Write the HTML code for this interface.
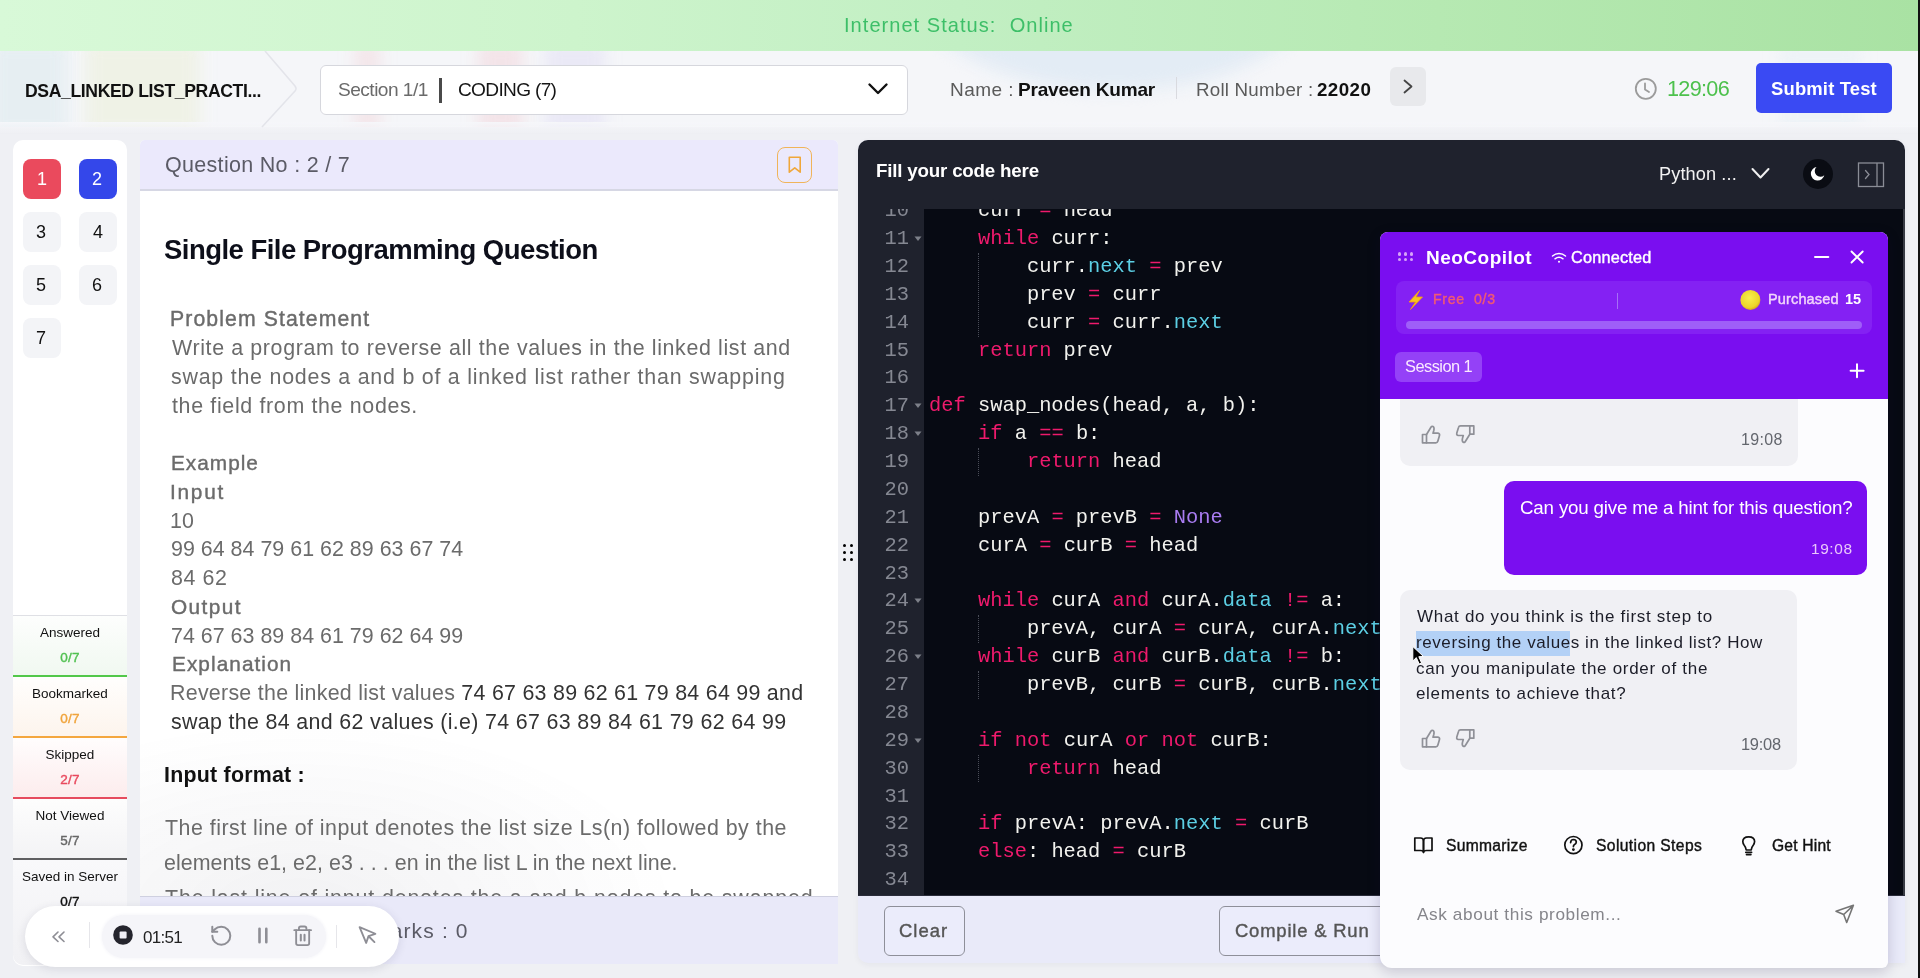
<!DOCTYPE html>
<html><head><meta charset="utf-8">
<style>
*{box-sizing:border-box;margin:0;padding:0}
html,body{width:1920px;height:978px;overflow:hidden}
body{position:relative;background:#eff0f4;font-family:"Liberation Sans",sans-serif;color:#111}
.a{position:absolute;white-space:pre;will-change:transform}
svg{position:absolute;overflow:visible}
.blob{position:absolute;filter:blur(8px)}
.qb{position:absolute;width:38px;height:40px;border-radius:8px;background:#f3f4f7}
.leg{position:absolute;left:13px;width:114px;height:61.5px}
.leg .bar{position:absolute;left:0;bottom:0;width:114px;height:3px}
.ln{position:absolute;left:0;width:51px;text-align:right;font-family:"Liberation Mono",monospace;font-size:20.4px;line-height:27.87px;color:#858892;white-space:pre}
.cl{position:absolute;left:5px;font-family:"Liberation Mono",monospace;font-size:20.4px;line-height:27.87px;color:#f2f2ee;white-space:pre}
.k{color:#ee1a6c}.at{color:#5ccfe4}.nn{color:#a97cf2}
.guide{position:absolute;width:0;border-left:1px dotted #4a4d58}
.dot{position:absolute;width:3.4px;height:3.4px;border-radius:50%}
</style></head>
<body>
<!-- banner -->
<div class="a" style="left:0;top:0;width:1918px;height:51px;background:linear-gradient(90deg,#d8f9d8 0%,#cdf4cc 30%,#c2efc3 50%,#b6e9b2 75%,#a9e2a3 100%)"></div>
<div class="a" style="left:1918px;top:0;width:2px;height:978px;background:#111"></div>

<!-- header -->
<div class="a" style="left:0;top:51px;width:1918px;height:76px;background:#f5f6f9;overflow:hidden">
  <div class="blob" style="left:-10px;top:-10px;width:78px;height:96px;background:#e5eef2;opacity:.9"></div>
  <div class="blob" style="left:85px;top:-10px;width:115px;height:96px;background:#eff2e5;opacity:.9"></div>
  <div class="blob" style="left:355px;top:-10px;width:25px;height:96px;background:#f3dfe3;opacity:.7"></div>
  <div class="blob" style="left:478px;top:-10px;width:45px;height:96px;background:#f3dde2;opacity:.7"></div>
  <div class="blob" style="left:545px;top:-10px;width:60px;height:96px;background:#e6e4f5;opacity:.7"></div>
  <div class="blob" style="left:915px;top:-165px;width:400px;height:205px;border-radius:50%;background:#e3ecf5;opacity:.95"></div>
  <div class="blob" style="left:1780px;top:-10px;width:80px;height:96px;background:#e9f1f6;opacity:.6"></div>
</div>
<div class="a" style="left:0;top:122px;width:1918px;height:12px;background:linear-gradient(180deg,rgba(245,246,249,1) 0%,rgba(239,240,244,0) 100%)"></div>
<svg style="left:0;top:0" width="1920" height="140"><path d="M265 51 L295 86 Q297 88.5 295 91 L262 127" fill="none" stroke="#e3e4ea" stroke-width="1.6"/></svg>
<div class="a" style="left:319.5px;top:64.5px;width:588px;height:50px;background:#fff;border:1px solid #d6d7dd;border-radius:6px"></div>
<div class="a" style="left:439px;top:78px;width:2.5px;height:24.5px;background:#4a4a4a"></div>
<svg style="left:0;top:0" width="1" height="1"><path d="M869.5 84.5 L878 93 L886.5 84.5" fill="none" stroke="#111" stroke-width="2.4" stroke-linecap="round" stroke-linejoin="round"/></svg>
<div class="a" style="left:1175.5px;top:77px;width:1px;height:22px;background:#d9dadf"></div>
<div class="a" style="left:1390px;top:67px;width:35.5px;height:38.5px;background:#e8e9ec;border-radius:6px"></div>
<svg style="left:0;top:0" width="1" height="1"><path d="M1404.5 80.5 L1411.5 86.5 L1404.5 92.5" fill="none" stroke="#444" stroke-width="1.8" stroke-linecap="round" stroke-linejoin="round"/></svg>
<svg style="left:0;top:0" width="1" height="1"><circle cx="1645.8" cy="88.8" r="10" fill="none" stroke="#9b9b9b" stroke-width="1.8"/><path d="M1645 83.5 V89.5 L1649 92" fill="none" stroke="#9b9b9b" stroke-width="1.8" stroke-linecap="round" stroke-linejoin="round"/></svg>
<div class="a" style="left:1756.4px;top:63.4px;width:136px;height:50px;background:#3a4af3;border-radius:5px"></div>

<!-- sidebar -->
<div class="a" style="left:13px;top:140px;width:114px;height:826px;background:#fff;border-radius:10px"></div>
<div class="qb" style="left:23px;top:158.5px;background:#ea4a5d"></div>
<div class="qb" style="left:79px;top:158.5px;background:#3447ea"></div>
<div class="qb" style="left:23px;top:212px"></div>
<div class="qb" style="left:79px;top:212px"></div>
<div class="qb" style="left:23px;top:265px"></div>
<div class="qb" style="left:79px;top:265px"></div>
<div class="qb" style="left:23px;top:318px"></div>
<div class="a" style="left:13px;top:615px;width:114px;height:1px;background:#dfe0e5"></div>
<div class="leg" style="top:616px;background:linear-gradient(180deg,#fdfefd 0%,#f0f8f0 100%)"><div class="bar" style="background:#52c84a"></div></div>
<div class="leg" style="top:677px;background:linear-gradient(180deg,#fffefd 0%,#fdf4ec 100%)"><div class="bar" style="background:#f4a73f"></div></div>
<div class="leg" style="top:738px;background:linear-gradient(180deg,#fffdfd 0%,#fcebec 100%)"><div class="bar" style="background:#e64b5e"></div></div>
<div class="leg" style="top:799px;background:linear-gradient(180deg,#fdfdfd 0%,#f3f3f5 100%)"><div class="bar" style="background:#5f5f61"></div></div>
<div class="leg" style="top:860px;height:105px;background:linear-gradient(180deg,#f9f9fb 0%,#f1f1f4 100%);border-radius:0 0 10px 10px"></div>

<!-- question panel -->
<div class="a" style="left:140px;top:140px;width:698px;height:823px;background:#fff;border-radius:5px 5px 0 0"></div>
<div class="a" style="left:140px;top:140px;width:698px;height:51px;background:#ebe9fc;border-bottom:2px solid #d6d7e4;border-radius:5px 5px 0 0"></div>
<div class="a" style="left:140px;top:700px;width:698px;height:196px;background:radial-gradient(ellipse 380px 190px at 160px 210px,rgba(30,30,60,.06),rgba(30,30,60,0))"></div>
<div class="a" style="left:777px;top:147px;width:35px;height:35.5px;border:1.4px solid #f0b45a;border-radius:8px"></div>
<svg style="left:0;top:0" width="1" height="1"><path d="M789.3 157.3 H800.2 V172.2 L794.75 167.8 L789.3 172.2 Z" fill="none" stroke="#f0a73a" stroke-width="1.6" stroke-linejoin="round"/></svg>

<!-- drag handle -->
<div class="dot" style="left:842.7px;top:543.5px;background:#000"></div><div class="dot" style="left:850px;top:543.5px;background:#000"></div>
<div class="dot" style="left:842.7px;top:550.6px;background:#000"></div><div class="dot" style="left:850px;top:550.6px;background:#000"></div>
<div class="dot" style="left:842.7px;top:557.7px;background:#000"></div><div class="dot" style="left:850px;top:557.7px;background:#000"></div>

<!-- editor -->
<div class="a" style="left:858px;top:140px;width:1047px;height:823px;border-radius:10px 10px 0 10px;overflow:hidden;background:#e9eaf9;box-shadow:0 2px 6px rgba(30,30,70,.05)">
  <div class="a" style="left:0;top:0;width:1047px;height:69px;background:#1f222d"></div>
  <div class="a" style="left:0;top:69px;width:66px;height:686px;background:#1f222d;overflow:hidden">
<div class="ln" style="top:-11.75px">10</div>
<div class="ln" style="top:16.12px">11</div>
<svg style="left:56px;top:26.98px" width="8" height="6"><path d="M0.5 0.5 L7.5 0.5 L4 5 Z" fill="#7d8089"/></svg>
<div class="ln" style="top:43.99px">12</div>
<div class="ln" style="top:71.86px">13</div>
<div class="ln" style="top:99.73px">14</div>
<div class="ln" style="top:127.60px">15</div>
<div class="ln" style="top:155.47px">16</div>
<div class="ln" style="top:183.34px">17</div>
<svg style="left:56px;top:194.20px" width="8" height="6"><path d="M0.5 0.5 L7.5 0.5 L4 5 Z" fill="#7d8089"/></svg>
<div class="ln" style="top:211.21px">18</div>
<svg style="left:56px;top:222.07px" width="8" height="6"><path d="M0.5 0.5 L7.5 0.5 L4 5 Z" fill="#7d8089"/></svg>
<div class="ln" style="top:239.08px">19</div>
<div class="ln" style="top:266.95px">20</div>
<div class="ln" style="top:294.82px">21</div>
<div class="ln" style="top:322.69px">22</div>
<div class="ln" style="top:350.56px">23</div>
<div class="ln" style="top:378.43px">24</div>
<svg style="left:56px;top:389.29px" width="8" height="6"><path d="M0.5 0.5 L7.5 0.5 L4 5 Z" fill="#7d8089"/></svg>
<div class="ln" style="top:406.30px">25</div>
<div class="ln" style="top:434.17px">26</div>
<svg style="left:56px;top:445.03px" width="8" height="6"><path d="M0.5 0.5 L7.5 0.5 L4 5 Z" fill="#7d8089"/></svg>
<div class="ln" style="top:462.04px">27</div>
<div class="ln" style="top:489.91px">28</div>
<div class="ln" style="top:517.78px">29</div>
<svg style="left:56px;top:528.64px" width="8" height="6"><path d="M0.5 0.5 L7.5 0.5 L4 5 Z" fill="#7d8089"/></svg>
<div class="ln" style="top:545.65px">30</div>
<div class="ln" style="top:573.52px">31</div>
<div class="ln" style="top:601.39px">32</div>
<div class="ln" style="top:629.26px">33</div>
<div class="ln" style="top:657.13px">34</div>
  </div>
  <div class="a" style="left:66px;top:69px;width:981px;height:686px;background:#070a13;overflow:hidden">
    <div class="guide" style="left:53.5px;top:44px;height:83.6px"></div>
    <div class="guide" style="left:53.5px;top:239px;height:27.9px"></div>
    <div class="guide" style="left:53.5px;top:406.3px;height:27.9px"></div>
    <div class="guide" style="left:53.5px;top:462px;height:27.9px"></div>
    <div class="guide" style="left:53.5px;top:545.6px;height:27.9px"></div>
<div class="cl" style="top:-11.75px">    curr <span class="k">=</span> head</div>
<div class="cl" style="top:16.12px">    <span class="k">while</span> curr:</div>
<div class="cl" style="top:43.99px">        curr.<span class="at">next</span> <span class="k">=</span> prev</div>
<div class="cl" style="top:71.86px">        prev <span class="k">=</span> curr</div>
<div class="cl" style="top:99.73px">        curr <span class="k">=</span> curr.<span class="at">next</span></div>
<div class="cl" style="top:127.60px">    <span class="k">return</span> prev</div>
<div class="cl" style="top:155.47px"></div>
<div class="cl" style="top:183.34px"><span class="k">def</span> swap_nodes(head, a, b):</div>
<div class="cl" style="top:211.21px">    <span class="k">if</span> a <span class="k">==</span> b:</div>
<div class="cl" style="top:239.08px">        <span class="k">return</span> head</div>
<div class="cl" style="top:266.95px"></div>
<div class="cl" style="top:294.82px">    prevA <span class="k">=</span> prevB <span class="k">=</span> <span class="nn">None</span></div>
<div class="cl" style="top:322.69px">    curA <span class="k">=</span> curB <span class="k">=</span> head</div>
<div class="cl" style="top:350.56px"></div>
<div class="cl" style="top:378.43px">    <span class="k">while</span> curA <span class="k">and</span> curA.<span class="at">data</span> <span class="k">!=</span> a:</div>
<div class="cl" style="top:406.30px">        prevA, curA <span class="k">=</span> curA, curA.<span class="at">next</span></div>
<div class="cl" style="top:434.17px">    <span class="k">while</span> curB <span class="k">and</span> curB.<span class="at">data</span> <span class="k">!=</span> b:</div>
<div class="cl" style="top:462.04px">        prevB, curB <span class="k">=</span> curB, curB.<span class="at">next</span></div>
<div class="cl" style="top:489.91px"></div>
<div class="cl" style="top:517.78px">    <span class="k">if</span> <span class="k">not</span> curA <span class="k">or</span> <span class="k">not</span> curB:</div>
<div class="cl" style="top:545.65px">        <span class="k">return</span> head</div>
<div class="cl" style="top:573.52px"></div>
<div class="cl" style="top:601.39px">    <span class="k">if</span> prevA: prevA.<span class="at">next</span> <span class="k">=</span> curB</div>
<div class="cl" style="top:629.26px">    <span class="k">else</span>: head <span class="k">=</span> curB</div>
<div class="cl" style="top:657.13px"></div>
  </div>
  <div class="a" style="left:1045px;top:69px;width:2px;height:686px;background:#383b44"></div>
  <div class="a" style="left:0;top:755px;width:1047px;height:1px;background:#2a2c3a"></div>
</div>
<svg style="left:0;top:0" width="1" height="1"><path d="M1752.5 169 L1760.5 177.5 L1768.5 169" fill="none" stroke="#f0f0f0" stroke-width="2" stroke-linecap="round" stroke-linejoin="round"/></svg>
<div class="a" style="left:1802.5px;top:159px;width:30px;height:30px;border-radius:50%;background:#0a0c13"></div>
<svg style="left:0;top:0" width="1" height="1"><path d="M1816.5 167 A6.8 6.8 0 1 0 1824.3 175.2 A5.2 5.2 0 0 1 1816.5 167 Z" fill="#ffffff"/></svg>
<svg style="left:0;top:0" width="1" height="1"><rect x="1858.5" y="163" width="25" height="23.5" fill="none" stroke="#8a8d96" stroke-width="1.3"/><path d="M1877 163 V186.5" stroke="#8a8d96" stroke-width="1.3"/><path d="M1865.5 170.5 L1869 174.5 L1865.5 178.5" fill="none" stroke="#8a8d96" stroke-width="1.3" stroke-linecap="round"/></svg>
<div class="a" style="left:884px;top:906px;width:80.5px;height:49.5px;border:1.3px solid #8e8f99;border-radius:6px;background:#ebecfb"></div>
<div class="a" style="left:1219.4px;top:906.2px;width:200px;height:49.5px;border:1.3px solid #8e8f99;border-radius:6px;background:#ebecfb"></div>
<div class="a" style="font-size:20.06px;line-height:20.06px;color:#3dbf68;letter-spacing:1.03px;left:844.0px;top:14.7px;">Internet Status:&nbsp; Online</div>
<div class="a" style="font-size:17.6px;line-height:17.6px;color:#111;font-weight:700;letter-spacing:-0.375px;left:25.0px;top:83.0px;">DSA_LINKED LIST_PRACTI...</div>
<div class="a" style="font-size:19.11px;line-height:19.11px;color:#6a6a6a;letter-spacing:-0.525px;left:338.0px;top:80.25px;">Section 1/1</div>
<div class="a" style="font-size:19.11px;line-height:19.11px;color:#151515;letter-spacing:-0.683px;left:457.75px;top:80.25px;">CODING (7)</div>
<div class="a" style="font-size:19.04px;line-height:19.04px;color:#5a5a5a;letter-spacing:0.46px;left:949.6px;top:80.0px;">Name :</div>
<div class="a" style="font-size:19.04px;line-height:19.04px;color:#111;font-weight:700;letter-spacing:-0.2px;left:1018.0px;top:80.0px;">Praveen Kumar</div>
<div class="a" style="font-size:18.75px;line-height:18.75px;color:#5a5a5a;letter-spacing:0.208px;left:1195.5px;top:80.9px;">Roll Number :</div>
<div class="a" style="font-size:18.75px;line-height:18.75px;color:#111;font-weight:700;letter-spacing:0.425px;left:1317.0px;top:80.9px;">22020</div>
<div class="a" style="font-size:21.66px;line-height:21.66px;color:#4dc14d;letter-spacing:-0.7px;left:1666.9px;top:77.9px;">129:06</div>
<div class="a" style="font-size:18.46px;line-height:18.46px;color:#ffffff;font-weight:700;letter-spacing:0.16px;left:1771.4px;top:79.9px;">Submit Test</div>
<div class="a" style="font-size:18px;line-height:18px;color:#fff;left:37.0px;top:170.1px;">1</div>
<div class="a" style="font-size:18px;line-height:18px;color:#fff;left:92.0px;top:170.1px;">2</div>
<div class="a" style="font-size:18px;line-height:18px;color:#111;left:36.0px;top:223.1px;">3</div>
<div class="a" style="font-size:18px;line-height:18px;color:#111;left:93.0px;top:223.1px;">4</div>
<div class="a" style="font-size:18px;line-height:18px;color:#111;left:36.0px;top:276.1px;">5</div>
<div class="a" style="font-size:18px;line-height:18px;color:#111;left:92.0px;top:276.1px;">6</div>
<div class="a" style="font-size:18px;line-height:18px;color:#111;left:36.0px;top:329.1px;">7</div>
<div class="a" style="font-size:13.5px;line-height:13.5px;color:#111;left:13px;width:114px;text-align:center;top:625.9px;">Answered</div>
<div class="a" style="font-size:13.5px;line-height:13.5px;color:#52c152;letter-spacing:0.3px;-webkit-text-stroke:0.4px #52c152;left:13px;width:114px;text-align:center;top:650.9px;">0/7</div>
<div class="a" style="font-size:13.5px;line-height:13.5px;color:#111;left:13px;width:114px;text-align:center;top:687.4px;">Bookmarked</div>
<div class="a" style="font-size:13.5px;line-height:13.5px;color:#f0a43c;letter-spacing:0.3px;-webkit-text-stroke:0.4px #f0a43c;left:13px;width:114px;text-align:center;top:712.4px;">0/7</div>
<div class="a" style="font-size:13.5px;line-height:13.5px;color:#111;left:13px;width:114px;text-align:center;top:748.4px;">Skipped</div>
<div class="a" style="font-size:13.5px;line-height:13.5px;color:#e84a5e;letter-spacing:0.3px;-webkit-text-stroke:0.4px #e84a5e;left:13px;width:114px;text-align:center;top:773.4px;">2/7</div>
<div class="a" style="font-size:13.5px;line-height:13.5px;color:#111;left:13px;width:114px;text-align:center;top:809.4px;">Not Viewed</div>
<div class="a" style="font-size:13.5px;line-height:13.5px;color:#666;letter-spacing:0.3px;-webkit-text-stroke:0.4px #666;left:13px;width:114px;text-align:center;top:834.4px;">5/7</div>
<div class="a" style="font-size:13.5px;line-height:13.5px;color:#111;left:13px;width:114px;text-align:center;top:869.9px;">Saved in Server</div>
<div class="a" style="font-size:13.5px;line-height:13.5px;color:#111;letter-spacing:0.3px;-webkit-text-stroke:0.4px #111;left:13px;width:114px;text-align:center;top:894.9px;">0/7</div>
<div class="a" style="font-size:21.51px;line-height:21.51px;color:#5b5b66;letter-spacing:0.306px;left:164.6px;top:154.9px;">Question No : 2 / 7</div>
<div class="a" style="font-size:27.47px;line-height:27.47px;color:#0d0f1a;font-weight:700;letter-spacing:-0.516px;left:164.0px;top:236.1px;">Single File Programming Question</div>
<div class="a" style="font-size:21.22px;line-height:21.22px;color:#6b6b6b;letter-spacing:1.094px;-webkit-text-stroke:0.4px #6b6b6b;left:170.0px;top:308.3px;">Problem Statement</div>
<div class="a" style="font-size:21.4px;line-height:21.4px;color:#6b6b6b;letter-spacing:0.629px;left:172.0px;top:338.05px;">Write a program to reverse all the values in the linked list and</div>
<div class="a" style="font-size:21.4px;line-height:21.4px;color:#6b6b6b;letter-spacing:0.769px;left:171.0px;top:366.8px;">swap the nodes a and b of a linked list rather than swapping</div>
<div class="a" style="font-size:21.4px;line-height:21.4px;color:#6b6b6b;letter-spacing:0.658px;left:172.0px;top:395.55px;">the field from the nodes.</div>
<div class="a" style="font-size:20.8px;line-height:20.8px;color:#6b6b6b;letter-spacing:1.0px;-webkit-text-stroke:0.4px #6b6b6b;left:171.0px;top:453.05px;">Example</div>
<div class="a" style="font-size:20.8px;line-height:20.8px;color:#6b6b6b;letter-spacing:1.75px;-webkit-text-stroke:0.4px #6b6b6b;left:170.0px;top:481.8px;">Input</div>
<div class="a" style="font-size:21.4px;line-height:21.4px;color:#6b6b6b;left:170.0px;top:510.55px;">10</div>
<div class="a" style="font-size:21.4px;line-height:21.4px;color:#6b6b6b;letter-spacing:0.025px;left:170.7px;top:539.3px;">99 64 84 79 61 62 89 63 67 74</div>
<div class="a" style="font-size:21.4px;line-height:21.4px;color:#6b6b6b;letter-spacing:0.575px;left:170.7px;top:568.05px;">84 62</div>
<div class="a" style="font-size:20.8px;line-height:20.8px;color:#6b6b6b;letter-spacing:1.4px;-webkit-text-stroke:0.4px #6b6b6b;left:171.0px;top:596.8px;">Output</div>
<div class="a" style="font-size:21.4px;line-height:21.4px;color:#6b6b6b;letter-spacing:0.025px;left:170.7px;top:625.55px;">74 67 63 89 84 61 79 62 64 99</div>
<div class="a" style="font-size:20.8px;line-height:20.8px;color:#6b6b6b;letter-spacing:1.05px;-webkit-text-stroke:0.4px #6b6b6b;left:171.5px;top:654.3px;">Explanation</div>
<div class="a" style="font-size:21.4px;line-height:21.4px;color:#6b6b6b;letter-spacing:0.27px;left:169.6px;top:683.05px;">Reverse the linked list values <span style="color:#333">74 67 63 89 62 61 79 84 64 99 and</span></div>
<div class="a" style="font-size:21.4px;line-height:21.4px;color:#333;letter-spacing:0.34px;left:170.6px;top:711.8px;">swap the 84 and 62 values (i.e) 74 67 63 89 84 61 79 62 64 99</div>
<div class="a" style="font-size:21.37px;line-height:21.37px;color:#111;font-weight:700;letter-spacing:0.238px;left:164.3px;top:764.7px;">Input format :</div>
<div class="a" style="font-size:21.4px;line-height:21.4px;color:#6b6b6b;letter-spacing:0.48px;left:165.3px;top:817.7px;">The first line of input denotes the list size Ls(n) followed by the</div>
<div class="a" style="font-size:21.4px;line-height:21.4px;color:#6b6b6b;letter-spacing:0.051px;left:164.3px;top:853.0px;">elements e1, e2, e3 . . . en in the list L in the next line.</div>
<div class="a" style="font-size:21.4px;line-height:21.4px;color:#6b6b6b;letter-spacing:0.848px;left:165.3px;top:888.3px;">The last line of input denotes the a and b nodes to be swapped</div>
<div class="a" style="font-size:18.75px;line-height:18.75px;color:#ffffff;font-weight:700;letter-spacing:-0.2px;left:876.3px;top:161.9px;">Fill your code here</div>
<div class="a" style="font-size:18.17px;line-height:18.17px;color:#f2f2f2;letter-spacing:0.111px;left:1658.7px;top:165.0px;">Python ...</div>

<!-- question footer -->
<div class="a" style="left:140px;top:895.5px;width:698px;height:67.5px;background:#e9e9f9;border-top:1px solid #cfd0e0"></div>
<div class="a" style="font-size:21px;line-height:21px;color:#5b5b66;letter-spacing:1.15px;left:372.0px;top:919.5px;">Marks : 0</div>
<div class="a" style="font-size:18.46px;line-height:18.46px;color:#555;letter-spacing:1.05px;-webkit-text-stroke:0.4px #555;left:899.4px;top:921.7px;">Clear</div>
<div class="a" style="font-size:18.46px;line-height:18.46px;color:#555;letter-spacing:0.808px;-webkit-text-stroke:0.4px #555;left:1234.8px;top:921.7px;">Compile &amp; Run</div>

<!-- copilot -->
<div class="a" style="left:1380px;top:231.5px;width:508px;height:735.5px;background:#fcfcfe;border-radius:8px 8px 6px 12px;overflow:hidden;box-shadow:0 4px 14px rgba(20,10,60,.18)">
  <div class="a" style="left:20px;top:100px;width:398px;height:133.5px;background:#f0f0f4;border-radius:10px"></div>
  <div class="a" style="left:124.4px;top:248.5px;width:362.6px;height:93.7px;background:#7a0ef0;border-radius:10px"></div>
  <div class="a" style="left:20px;top:357.8px;width:397px;height:180.2px;background:#f0f0f4;border-radius:10px"></div>
  <div class="a" style="left:36.1px;top:398.7px;width:153.7px;height:24.5px;background:#b3d1f6"></div>
  <div class="a" style="left:0;top:0;width:508px;height:167px;background:#7a0ef0"></div>
  <div class="a" style="left:16px;top:48.5px;width:476px;height:53px;background:#8421f3;border-radius:8px"></div>
  <div class="a" style="left:25.6px;top:88.8px;width:456.4px;height:7.7px;background:#9f5ef8;border-radius:4px"></div>
  <div class="a" style="left:237px;top:61px;width:1px;height:15.5px;background:#a66ff6"></div>
  <div class="a" style="left:15.4px;top:119.5px;width:87.4px;height:30px;background:#9441f7;border-radius:6px"></div>
</div>
<div class="dot" style="left:1397.8px;top:252.4px;width:3.2px;height:3.2px;background:#d5a3f7"></div>
<div class="dot" style="left:1403.7px;top:252.4px;width:3.2px;height:3.2px;background:#d5a3f7"></div>
<div class="dot" style="left:1410px;top:252.4px;width:3.2px;height:3.2px;background:#d5a3f7"></div>
<div class="dot" style="left:1397.8px;top:257.6px;width:3.2px;height:3.2px;background:#d5a3f7"></div>
<div class="dot" style="left:1403.7px;top:257.6px;width:3.2px;height:3.2px;background:#d5a3f7"></div>
<div class="dot" style="left:1410px;top:257.6px;width:3.2px;height:3.2px;background:#d5a3f7"></div>
<svg style="left:0;top:0" width="1" height="1" fill="none" stroke="#fff" stroke-width="1.5" stroke-linecap="round">
  <path d="M1552.5 256 A10 10 0 0 1 1565.5 256"/>
  <path d="M1555 258.8 A6.3 6.3 0 0 1 1563 258.8"/>
  <circle cx="1559" cy="261.7" r="1" fill="#fff" stroke="none"/>
  <path d="M1815 257 H1828.3" stroke-width="2"/>
  <path d="M1851.5 251.5 L1862.7 262.5 M1862.7 251.5 L1851.5 262.5" stroke-width="1.9"/>
  <path d="M1857 364.3 V377.3 M1850.6 370.8 H1863.6" stroke-width="2"/>
</svg>
<svg style="left:0;top:0" width="1" height="1">
  <path d="M1419.5 290.5 L1409 302 H1415.5 L1410.5 309.5 L1422.5 297 H1416 Z" fill="#f9c61c" stroke="#f39a16" stroke-width="0.8" stroke-linejoin="round"/>
  <defs><radialGradient id="coin" cx="45%" cy="40%" r="60%"><stop offset="0" stop-color="#f8ef4e"/><stop offset=".8" stop-color="#ecd52a"/><stop offset="1" stop-color="#d7a91e"/></radialGradient></defs>
  <circle cx="1750.4" cy="299.9" r="10" fill="url(#coin)"/>
</svg>
<svg style="left:0;top:0" width="1" height="1" fill="none" stroke="#8f9097" stroke-width="1.7" stroke-linejoin="round" stroke-linecap="round">
  <g>
    <path d="M1422.5 434.5 H1426.5 V442.8 H1422.5 Z"/>
    <path d="M1426.5 434.5 L1430.5 428 Q1431.5 425.6 1433 426.5 Q1434.6 427.5 1433.8 430.5 L1433 433.2 H1438 Q1440 433.5 1439.5 435.6 L1437.8 441.3 Q1437.4 442.8 1435.8 442.8 H1426.5"/>
    <path d="M1473.8 434.2 H1469.8 V425.8 H1473.8 Z"/>
    <path d="M1469.8 434.2 L1465.8 440.7 Q1464.8 443.1 1463.3 442.2 Q1461.7 441.2 1462.5 438.2 L1463.3 435.5 H1458.3 Q1456.3 435.2 1456.8 433.1 L1458.5 427.4 Q1458.9 425.8 1460.5 425.8 H1469.8"/>
  </g>
  <g transform="translate(0,304)">
    <path d="M1422.5 434.5 H1426.5 V442.8 H1422.5 Z"/>
    <path d="M1426.5 434.5 L1430.5 428 Q1431.5 425.6 1433 426.5 Q1434.6 427.5 1433.8 430.5 L1433 433.2 H1438 Q1440 433.5 1439.5 435.6 L1437.8 441.3 Q1437.4 442.8 1435.8 442.8 H1426.5"/>
    <path d="M1473.8 434.2 H1469.8 V425.8 H1473.8 Z"/>
    <path d="M1469.8 434.2 L1465.8 440.7 Q1464.8 443.1 1463.3 442.2 Q1461.7 441.2 1462.5 438.2 L1463.3 435.5 H1458.3 Q1456.3 435.2 1456.8 433.1 L1458.5 427.4 Q1458.9 425.8 1460.5 425.8 H1469.8"/>
  </g>
</svg>
<!-- mouse cursor -->
<svg style="left:0;top:0" width="1" height="1"><path d="M1412.8 646.5 L1412.8 661 L1416.3 657.6 L1419.2 664 L1421.6 663 L1418.8 656.7 L1423.5 656.5 Z" fill="#000" stroke="#fff" stroke-width="1"/></svg>
<svg style="left:0;top:0" width="1" height="1" fill="none" stroke="#111" stroke-width="1.7" stroke-linejoin="round" stroke-linecap="round">
  <path d="M1414.8 838 H1420.5 Q1423.5 838 1423.5 841 V852.3 Q1423.5 850.5 1420.5 850.5 H1414.8 Z"/>
  <path d="M1432 838 H1426.5 Q1423.5 838 1423.5 841 V852.3 Q1423.5 850.5 1426.5 850.5 H1432 Z"/>
  <circle cx="1573.4" cy="845.1" r="8.6"/>
  <path d="M1570.6 842.6 Q1570.8 839.5 1573.5 839.5 Q1576.3 839.6 1576.3 842.1 Q1576.3 843.9 1574.3 844.8 Q1573.4 845.3 1573.4 846.6"/>
  <circle cx="1573.4" cy="849.6" r="0.6" fill="#111"/>
  <path d="M1746.2 850 Q1745.8 847 1744.2 845.2 Q1742.8 843.4 1742.8 841.6 Q1742.8 836.8 1748.7 836.8 Q1754.6 836.8 1754.6 841.6 Q1754.6 843.4 1753.2 845.2 Q1751.6 847 1751.2 850 Z"/>
  <path d="M1745.8 852.3 H1751.6 M1746.5 854.6 H1750.9"/>
</svg>
<svg style="left:0;top:0" width="1" height="1" fill="none" stroke="#757575" stroke-width="1.6" stroke-linejoin="round"><path d="M1853.4 905.3 L1836 911.2 L1843.7 914.5 L1846.7 922.5 Z M1853.4 905.3 L1843.7 914.5"/></svg>
<div class="a" style="font-size:19.04px;line-height:19.04px;color:#ffffff;font-weight:700;letter-spacing:0.467px;left:1425.5px;top:247.6px;">NeoCopilot</div>
<div class="a" style="font-size:16.28px;line-height:16.28px;color:#ffffff;letter-spacing:0.213px;-webkit-text-stroke:0.4px #ffffff;left:1571.3px;top:248.6px;">Connected</div>
<div class="a" style="font-size:14.17px;line-height:14.17px;color:#f25a70;letter-spacing:0.675px;-webkit-text-stroke:0.4px #f25a70;left:1433.0px;top:292.0px;">Free&nbsp; 0/3</div>
<div class="a" style="font-size:14.54px;line-height:14.54px;color:#f3d6fb;letter-spacing:0.125px;-webkit-text-stroke:0.4px #f3d6fb;left:1767.5px;top:292.25px;">Purchased</div>
<div class="a" style="font-size:14.54px;line-height:14.54px;color:#ffffff;font-weight:700;left:1845.25px;top:292.25px;">15</div>
<div class="a" style="font-size:16.4px;line-height:16.4px;color:#fbeaff;letter-spacing:-0.537px;left:1405.0px;top:358.1px;">Session 1</div>
<div class="a" style="font-size:15.99px;line-height:15.99px;color:#63666d;letter-spacing:0.325px;left:1740.7px;top:432.0px;">19:08</div>
<div class="a" style="font-size:18.75px;line-height:18.75px;color:#ffffff;letter-spacing:-0.18px;left:1519.6px;top:499.4px;">Can you give me a hint for this question?</div>
<div class="a" style="font-size:15.41px;line-height:15.41px;color:#eac8fb;letter-spacing:0.6px;left:1811.0px;top:541.1px;">19:08</div>
<div class="a" style="font-size:17px;line-height:17px;color:#1c1d28;letter-spacing:0.697px;left:1416.8px;top:608.4px;">What do you think is the first step to</div>
<div class="a" style="font-size:17px;line-height:17px;color:#1c1d28;letter-spacing:0.584px;left:1415.5px;top:634.2px;">reversing the values in the linked list? How</div>
<div class="a" style="font-size:17px;line-height:17px;color:#1c1d28;letter-spacing:0.703px;left:1415.5px;top:659.6px;">can you manipulate the order of the</div>
<div class="a" style="font-size:17px;line-height:17px;color:#1c1d28;letter-spacing:0.663px;left:1415.5px;top:685.0px;">elements to achieve that?</div>
<div class="a" style="font-size:16.42px;line-height:16.42px;color:#63666d;letter-spacing:-0.25px;left:1741.0px;top:735.8px;">19:08</div>
<div class="a" style="font-size:15.63px;line-height:15.63px;color:#111;letter-spacing:0.294px;-webkit-text-stroke:0.4px #111;left:1445.9px;top:838.0px;">Summarize</div>
<div class="a" style="font-size:15.63px;line-height:15.63px;color:#111;letter-spacing:0.385px;-webkit-text-stroke:0.4px #111;left:1595.9px;top:838.0px;">Solution Steps</div>
<div class="a" style="font-size:15.63px;line-height:15.63px;color:#111;letter-spacing:0.193px;-webkit-text-stroke:0.4px #111;left:1771.9px;top:838.0px;">Get Hint</div>
<div class="a" style="font-size:17.22px;line-height:17.22px;color:#85858b;letter-spacing:0.604px;left:1416.5px;top:905.75px;">Ask about this problem...</div>

<!-- recorder pill -->
<div class="a" style="left:25.3px;top:905.8px;width:374.4px;height:61.1px;background:#fff;border-radius:31px;box-shadow:0 2px 10px rgba(40,40,70,.12)"></div>
<div class="a" style="left:101.5px;top:915px;width:223.5px;height:42.5px;background:#f5f5f9;border-radius:22px;box-shadow:0 0 3px 1px #f7f7fa"></div>
<div class="a" style="left:89.4px;top:922px;width:1px;height:25.5px;background:#e6e6ea"></div>
<div class="a" style="left:336.3px;top:924.6px;width:1px;height:23.4px;background:#e6e6ea"></div>
<svg style="left:0;top:0" width="1" height="1" fill="none" stroke="#8e8e95" stroke-width="1.6" stroke-linecap="round" stroke-linejoin="round">
  <path d="M58 932 L53 936.8 L58 941.5 M64 932 L59 936.8 L64 941.5"/>
</svg>
<svg style="left:0;top:0" width="1" height="1">
  <circle cx="123" cy="935" r="9.8" fill="#25252d"/>
  <rect x="119.6" y="931.6" width="7" height="7" rx="1" fill="#f1f0f7"/>
</svg>
<svg style="left:0;top:0" width="1" height="1" fill="none" stroke="#8e8e95" stroke-width="2" stroke-linecap="round" stroke-linejoin="round">
  <g transform="translate(209.3,923.8)"><path d="M3 12a9 9 0 1 0 9-9 9.75 9.75 0 0 0-6.74 2.74L3 8"/><path d="M3 3v5h5"/></g>
  <path d="M259.5 928.8 V942.2 M266.3 928.8 V942.2" stroke-width="2.6"/>
  <g transform="translate(291.5,924.6) scale(0.93)"><path d="M3 6h18"/><path d="M19 6v14c0 1-1 2-2 2H7c-1 0-2-1-2-2V6"/><path d="M8 6V4c0-1 1-2 2-2h4c1 0 2 1 2 2v2"/><path d="M10 11v6M14 11v6" stroke-width="2.2"/></g>
  <g transform="translate(356.8,924.4) scale(0.93)"><path d="M3 3l7.07 16.97 2.51-7.39 7.39-2.51L3 3z"/><path d="M13 13l6 6"/></g>
</svg>
<div class="a" style="font-size:17.01px;line-height:17.01px;color:#222;letter-spacing:-0.688px;left:142.75px;top:928.5px;">01:51</div>
</body></html>
